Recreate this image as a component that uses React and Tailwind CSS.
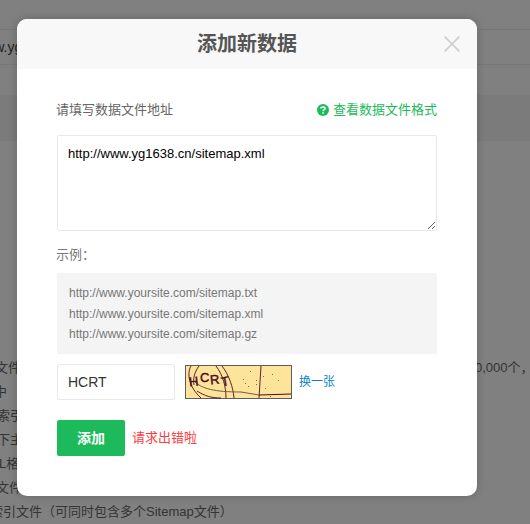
const sans = '"Liberation Sans", "Noto Sans CJK SC", sans-serif';

function Captcha() {
  const dark = '#4a0a20';
  const letter = { fontFamily: '"Liberation Sans", sans-serif', fontSize: 13, fontWeight: 400, fill: dark, stroke: dark, strokeWidth: 0.4 };
  const dots = [[65, 6], [58, 14], [60, 18], [63, 21], [71, 15], [71, 19], [78, 11], [87, 9], [93, 15], [80, 23], [85, 31]];
  return (
    <svg width="107" height="34" viewBox="0 0 107 34" className="block">
      <rect x="0.5" y="0.5" width="106" height="33" fill="#fde49a" stroke="#5c5c5c" />
      <g fill="none" stroke={dark} strokeWidth="0.9">
        <path d="M6 1 C2 8 3 21 16 33" />
        <path d="M14 1 C9 8 8 14 9 20" />
        <path d="M31 1 C38 10 41 22 41 33" />
        <path d="M37 1 C44 10 48 22 49 33" />
        <path d="M12 26 C20 31 26 33 36 33" />
        <path d="M76 1 L74 33" />
      </g>
      <path d="M8 15 C16 24 30 27 56 27 L74 30" fill="none" stroke="#7a5a40" strokeWidth="1" />
      <path d="M74 30 L106 29" fill="none" stroke={dark} strokeWidth="1" />
      <text x="4" y="21" {...letter} transform="rotate(-6 8 16)">H</text>
      <text x="15" y="17" {...letter}>C</text>
      <text x="25" y="19" {...letter} transform="rotate(-6 30 15)">R</text>
      <text x="36" y="21" {...letter} transform="rotate(-10 40 16)">T</text>
      <g fill="#8a6a40">
        {dots.map(([x, y]) => <rect key={`${x}-${y}`} x={x} y={y} width="1" height="1" />)}
      </g>
    </svg>
  );
}

export default function App() {
  const rows = [
    ['文件', '-ml-[5px]'],
    ['中', '-ml-[6px]'],
    ['索引', '-ml-[3px]'],
    ['下主', '-ml-[3px]'],
    ['L格', '-ml-[1px]'],
    ['文件', '-ml-[4px]'],
    ['索引文件（可同时包含多个Sitemap文件）', '-ml-[10px]'],
  ];
  return (
    <div className="relative w-[530px] h-[524px] overflow-hidden bg-[#808080]" style={{ fontFamily: sans }}>
      <div className="absolute left-0 top-[29px] w-full h-[36px] border-y border-[#777]"></div>
      <div className="absolute left-[-26px] top-[37px] text-[14px] leading-[20px] text-[#222] whitespace-nowrap">www.yg1638.cn</div>
      <div className="absolute left-0 top-[95px] w-full h-[46px] bg-[#7b7b7b]"></div>

      <div className="absolute left-0 top-[356px] w-full text-[13px] leading-[24px] text-[#333] whitespace-nowrap">
        {rows.map(([t, c], i) => (
          <div key={i} className={c}>{t}</div>
        ))}
      </div>
      <div className="absolute left-[475px] top-[356px] text-[13px] leading-[24px] text-[#333] whitespace-nowrap">0,000个，</div>

      <div className="absolute left-[17px] top-[19px] w-[460px] h-[477px] bg-white rounded-[10px] overflow-hidden shadow-[0_0_10px_rgba(0,0,0,0.2)]">
        <div className="relative h-[50px] bg-[#f8f8f8] flex items-center justify-center">
          <span className="text-[20px] font-bold text-[#555]">添加新数据</span>
          <svg className="absolute right-[17px] top-[17px]" width="16" height="16" viewBox="0 0 16 16">
            <path d="M0.5 0.5 L15.5 15.5 M15.5 0.5 L0.5 15.5" stroke="#d0d0d0" strokeWidth="1.8" fill="none" />
          </svg>
        </div>
        <div className="px-10 pt-[31px]">
          <div className="flex items-center justify-between h-[20px] text-[13px]">
            <span className="-ml-[1px] text-[#666]">请填写数据文件地址</span>
            <span className="flex items-center gap-[4px] text-[#1cba5a]">
              <svg width="12" height="12" viewBox="0 0 11 11">
                <circle cx="5.5" cy="5.5" r="5.5" fill="#1cba5a" />
                <path d="M3.6 4.2 C3.6 2.2 7.4 2.2 7.4 4.2 C7.4 5.4 5.5 5.4 5.5 6.6" stroke="#fff" strokeWidth="1.4" fill="none" />
                <rect x="4.8" y="7.5" width="1.4" height="1.4" fill="#fff" />
              </svg>
              查看数据文件格式
            </span>
          </div>
          <textarea
            readOnly
            defaultValue="http://www.yg1638.cn/sitemap.xml"
            className="block mt-[15px] w-[380px] h-[96px] border border-[#e8e8e8] rounded-[2px] px-[10px] py-[8px] text-[13px] leading-[20px] text-black outline-none"
          />
          <div className="mt-[14px] -ml-[1px] text-[13px] leading-[20px] text-[#777]">示例：</div>
          <div className="mt-[8px] w-[380px] h-[81px] bg-[#f4f4f4] rounded-[2px] px-3 pt-[10px] text-[12px] leading-[20.5px] text-[#777]">
            <div>http://www.yoursite.com/sitemap.txt</div>
            <div>http://www.yoursite.com/sitemap.xml</div>
            <div>http://www.yoursite.com/sitemap.gz</div>
          </div>
          <div className="mt-[10px] flex items-center">
            <div className="w-[118px] h-[36px] border border-[#e8e8e8] rounded-[2px] px-[10px] text-[14px] leading-[34px] text-[#333]">HCRT</div>
            <div className="ml-[10px]"><Captcha /></div>
            <span className="ml-[7px] text-[12px] text-[#0a84c6]">换一张</span>
          </div>
          <div className="mt-[20px] flex items-center">
            <div className="w-[68px] h-[36px] bg-[#1cba5a] rounded-[2px] text-white text-[14px] font-bold leading-[36px] text-center">添加</div>
            <span className="ml-[7px] text-[13px] text-[#ff3b3b]">请求出错啦</span>
          </div>
        </div>
      </div>
    </div>
  );
}
